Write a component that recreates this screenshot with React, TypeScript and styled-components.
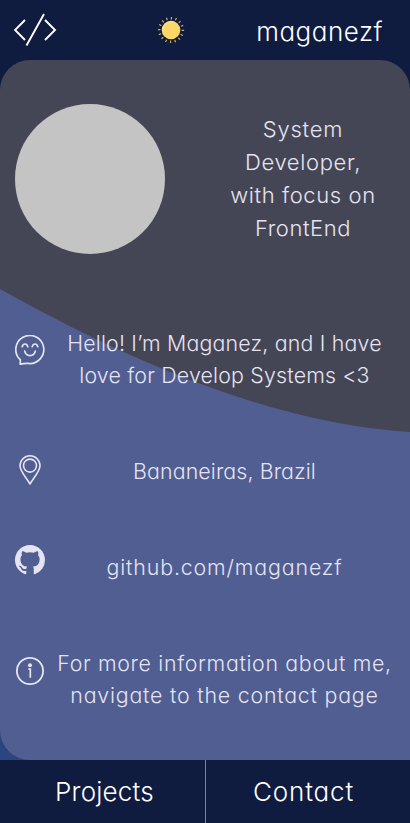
import React from "react";
import styled, { createGlobalStyle } from "styled-components";

const GlobalStyle = createGlobalStyle`
  * { box-sizing: border-box; }
  body {
    margin: 0;
    background: #0f1c40;
    color: #e6e4f2;
    font-family: Inter, "Open Sans", sans-serif;
    font-weight: 350;
    font-feature-settings: "cv11";
  }
`;

const Page = styled.div`
  display: flex;
  flex-direction: column;
  height: 823px;
  overflow: hidden;
`;

const Header = styled.header`
  display: flex;
  flex: none;
  align-items: center;
  justify-content: space-between;
  height: 60px;
  padding: 0 27px 0 14px;
  color: #fff;
`;

const ThemeButton = styled.button`
  display: flex;
  margin-left: 28px;
  padding: 0;
  border: 0;
  background: none;
`;

const Stage = styled.div`
  flex: none;
  height: 700px;
  background: linear-gradient(#0f1c40 50%, #2c4482 50%);
`;

const Panel = styled.main`
  position: relative;
  height: 700px;
  overflow: hidden;
  border-radius: 30px 30px 0 30px;
  background: #454655;
`;

const Wave = styled.svg`
  position: absolute;
  inset: 0;
`;

const Profile = styled.section`
  position: relative;
  display: flex;
  height: 237px;
  padding: 44px 34px 0 15px;
  justify-content: space-between;
`;

const Avatar = styled.div`
  width: 150px;
  height: 150px;
  border-radius: 50%;
  background: #c4c4c4;
`;

const Role = styled.h1`
  width: 146px;
  margin: 9px 0 0;
  font-size: 22px;
  font-weight: inherit;
  line-height: 33px;
`;

const Details = styled.ul`
  position: relative;
  margin: 0;
  padding: 0;
  list-style: none;
`;

const Detail = styled.li<{ $top: number; $height: number }>`
  display: flex;
  height: ${(p) => p.$height}px;
  padding: ${(p) => p.$top}px 18px 0 15px;
  font-size: 21.33px;
  line-height: 32px;
`;

const IconSlot = styled.span<{ $drop: number }>`
  flex: none;
  width: 30px;
  height: 30px;
  margin-top: ${(p) => p.$drop}px;
  svg { display: block; }
`;

const Copy = styled.div`
  flex: 1;
  min-width: 0;
  margin-left: 12px;
`;

const Line = styled.span<{ $track: number }>`
  display: flex;
  justify-content: center;
  white-space: nowrap;
  letter-spacing: ${(p) => p.$track}px;
`;

const Brand = styled.span`
  padding-top: 3px;
  font-size: 26px;
  line-height: 36px;
  letter-spacing: 0.5px;
`;

const Footer = styled.nav`
  display: grid;
  flex: none;
  grid-template-columns: 206px 204px;
  height: 63px;
`;

const Tab = styled.a<{ $track: number; $divided?: boolean }>`
  padding-left: ${(p) => (p.$divided ? 55 : 47)}px;
  border-right: ${(p) => (p.$divided ? "1px solid #5c83f2" : "0")};
  color: #fff;
  font-size: 26px;
  line-height: 63px;
  letter-spacing: ${(p) => p.$track}px;
`;

const CodeIcon = () => (
  <svg width="44" height="34" viewBox="0 0 44 34" fill="none" stroke="#fff" strokeWidth="1.9">
    <path d="M11 7 1 17l10 10M31 7l10 10-10 10M30 1 12.5 32.5" />
  </svg>
);

const rays = Array.from({ length: 16 }, (_, i) => i * 22.5);

const SunIcon = () => (
  <svg width="28" height="28" viewBox="0 0 28 28">
    <g stroke="#c9ae67" strokeWidth="1.2">
      {rays.map((angle) => (
        <path key={angle} d="M14 .9v2.5" transform={`rotate(${angle + 2} 14 14)`} />
      ))}
    </g>
    <circle cx="14" cy="14" r="9.3" fill="#ffd666" />
    <path d="M6 15A8.6 8.6 0 0 1 17 6" fill="none" stroke="#ffe49c" strokeWidth="1" />
  </svg>
);

const SmileIcon = () => (
  <svg width="30" height="30" viewBox="0 0 30 30" fill="none" stroke="#e6e4f2" strokeWidth="1.7" strokeLinecap="round" strokeLinejoin="round">
    <path d="M5.3 24.8A14 14 0 1 1 13 28.4Q9 28.3 5.3 29.2Z" />
    <path d="M7.2 11.7q.7-2.7 2.8-2.7t2.8 2.7M17.2 11.7q.7-2.7 2.8-2.7t2.8 2.7M9.7 16.2a5.4 5.4 0 0 0 10.6 0" />
  </svg>
);

const PinIcon = () => (
  <svg width="30" height="30" viewBox="0 0 30 30" fill="none" stroke="#e6e4f2" strokeWidth="1.6" strokeLinejoin="round">
    <path d="M15 29C12 23.5 5 16.5 5 10.8a10 10 0 0 1 20 0C25 16.5 18 23.5 15 29Z" />
    <circle cx="15" cy="10.6" r="6.5" />
  </svg>
);

const GithubIcon = () => (
  <svg width="30" height="30" viewBox="0 0 16 16" fill="#e6e4f2">
    <path d="M8 0C3.58 0 0 3.58 0 8c0 3.54 2.29 6.53 5.47 7.59.4.07.55-.17.55-.38 0-.19-.01-.82-.01-1.49-2.01.37-2.53-.49-2.69-.94-.09-.23-.48-.94-.82-1.13-.28-.15-.68-.52-.01-.53.63-.01 1.08.58 1.23.82.72 1.21 1.87.87 2.33.66.07-.52.28-.87.51-1.07-1.78-.2-3.64-.89-3.64-3.95 0-.87.31-1.59.82-2.15-.08-.2-.36-1.02.08-2.12 0 0 .67-.21 2.2.82.64-.18 1.32-.27 2-.27s1.36.09 2 .27c1.53-1.04 2.2-.82 2.2-.82.44 1.1.16 1.92.08 2.12.51.56.82 1.27.82 2.15 0 3.07-1.87 3.75-3.65 3.95.29.25.54.73.54 1.48 0 1.07-.01 1.93-.01 2.2 0 .21.15.46.55.38A8.01 8.01 0 0 0 16 8c0-4.42-3.58-8-8-8Z" />
  </svg>
);

const InfoIcon = () => (
  <svg width="30" height="30" viewBox="0 0 30 30" fill="none" stroke="#e6e4f2" strokeWidth="1.8">
    <circle cx="15" cy="15" r="13.1" />
    <circle cx="15" cy="9.3" r="2" fill="#e6e4f2" stroke="none" />
    <path d="M13.4 13.2h1.9v8.5" strokeWidth="1.7" />
  </svg>
);

export default function App() {
  return (
    <Page>
      <GlobalStyle />
      <Header>
        <CodeIcon />
        <ThemeButton aria-label="Toggle theme"><SunIcon /></ThemeButton>
        <Brand>maganezf</Brand>
      </Header>
      <Stage>
        <Panel>
          <Wave width="410" height="700" viewBox="0 0 410 700" aria-hidden="true">
            <path d="M0 229Q237 362 410 372V700H0Z" fill="#505e92" />
          </Wave>
          <Profile>
            <Avatar />
            <Role>
              <Line $track={0.75}>System</Line>
              <Line $track={0.65}>Developer,</Line>
              <Line $track={0.6}>with focus on</Line>
              <Line $track={0.55}>FrontEnd</Line>
            </Role>
          </Profile>
          <Details>
            <Detail $top={30} $height={127}>
              <IconSlot $drop={8}><SmileIcon /></IconSlot>
              <Copy>
                <Line $track={0.2}>Hello! I’m Maganez, and I have</Line>
                <Line $track={0.2}>love for Develop Systems &lt;3</Line>
              </Copy>
            </Detail>
            <Detail $top={31} $height={96}>
              <IconSlot $drop={0}><PinIcon /></IconSlot>
              <Copy><Line $track={0.12}>Bananeiras, Brazil</Line></Copy>
            </Detail>
            <Detail $top={31} $height={96}>
              <IconSlot $drop={-6}><GithubIcon /></IconSlot>
              <Copy><Line $track={0.87}>github.com/maganezf</Line></Copy>
            </Detail>
            <Detail $top={31} $height={112}>
              <IconSlot $drop={9}><InfoIcon /></IconSlot>
              <Copy>
                <Line $track={0.68}>For more information about me,</Line>
                <Line $track={0.8}>navigate to the contact page</Line>
              </Copy>
            </Detail>
          </Details>
        </Panel>
      </Stage>
      <Footer>
        <Tab $track={0.2} $divided>Projects</Tab>
        <Tab $track={0.85}>Contact</Tab>
      </Footer>
    </Page>
  );
}
